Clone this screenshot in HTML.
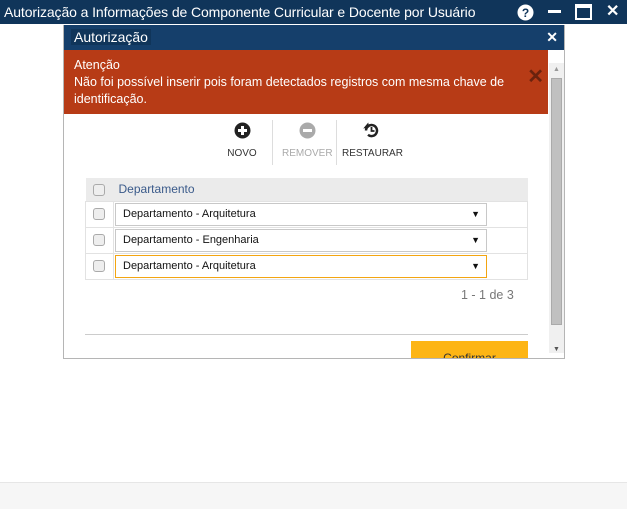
<!DOCTYPE html>
<html><head><meta charset="utf-8"><style>
*{box-sizing:border-box;margin:0;padding:0}
body{width:627px;height:509px;position:relative;background:#fff;font-family:"Liberation Sans",sans-serif;overflow:hidden}
.top{position:absolute;left:0;top:0;width:627px;height:24px;background:#10355a;color:#fff;font-size:14px;line-height:24px;padding-left:4px;letter-spacing:-0.1px}
.foot{position:absolute;left:0;top:482px;width:627px;height:27px;background:#f6f6f6;border-top:1px solid #e6e6e6}
.dlg{position:absolute;left:63px;top:25px;width:502px;height:334px;border:1px solid #b5b5b5;border-top:none;background:#fff;overflow:hidden}
.dt{height:25px;background:#153f6b;color:#fff;font-size:14px;line-height:25px;padding-left:7px}
.err{position:absolute;left:0;top:25px;width:484px;height:64px;background:#b73b16;color:#fff;font-size:12.5px;line-height:17px;padding:7px 10px}
.sb{position:absolute;left:485px;top:38px;width:15px;height:290px;background:#f0f0f0}
.thumb{position:absolute;left:2px;top:15px;width:11px;height:247px;background:#c0c0c0;border:1px solid #aaa}
.tb{position:absolute;top:97px;text-align:center;font-size:10px;color:#333;line-height:13px}
.tb svg{margin-bottom:4px}
.grid{position:absolute;left:21px;top:153px;width:443px;border-collapse:collapse}
.grid td{border:1px solid #e2e2e2;height:26px}
.hd td{background:#ebebeb;border:none;height:23px;color:#3a5a8a;font-size:12px}
.cb{display:inline-block;width:12px;height:12px;border:1px solid #aaa;border-radius:3px;background:#eee;margin-left:7px;vertical-align:middle}
.sel{width:372px;height:23px;border:1px solid #c8c8c8;margin-left:1px;font-size:11px;line-height:21px;padding-left:7px;position:relative;color:#111}
.sel:after{content:"▼";position:absolute;right:6px;top:0;font-size:9px}
</style></head><body>
<div class="top">Autorização a Informações de Componente Curricular e Docente por Usuário
<svg style="position:absolute;left:517px;top:4px" width="17" height="17"><circle cx="8.5" cy="8.5" r="8" fill="#fff"/><text x="8.5" y="13" font-size="12" font-weight="bold" text-anchor="middle" fill="#10355a" font-family="Liberation Sans">?</text></svg>
<div style="position:absolute;left:548px;top:10px;width:13px;height:3px;background:#fff"></div>
<div style="position:absolute;left:575px;top:4px;width:17px;height:16px;border:2px solid #fff;border-top-width:4px"></div>
<div style="position:absolute;left:606px;top:0;font-size:16px;font-weight:bold">✕</div>
</div>
<div class="dlg">
<div class="dt"><span style="background:#10355a;padding:0 3px">Autorização</span><span style="position:absolute;right:6px;top:0;font-weight:bold;font-size:14px">✕</span></div>
<div class="err">Atenção<br>Não foi possível inserir pois foram detectados registros com mesma chave de identificação.<span style="position:absolute;right:4px;top:19px;color:#6a220e;font-size:20px;font-weight:bold">✕</span></div>
<div class="sb"><div style="font-size:7px;color:#999;text-align:center;line-height:14px">▲</div><div class="thumb"></div><div style="position:absolute;bottom:0;width:15px;font-size:7px;color:#555;text-align:center">▼</div></div>
<div class="tb" style="left:161px;width:34px"><svg width="17" height="17" viewBox="0 0 17 17"><circle cx="8.5" cy="8.5" r="8" fill="#222"/><rect x="4" y="7" width="9" height="3" fill="#fff"/><rect x="7" y="4" width="3" height="9" fill="#fff"/></svg><br>NOVO</div>
<div style="position:absolute;left:208px;top:95px;width:1px;height:45px;background:#ddd"></div>
<div class="tb" style="left:218px;width:50px;color:#aaa"><svg width="17" height="17" viewBox="0 0 17 17"><circle cx="8.5" cy="8.5" r="8" fill="#aaa"/><rect x="4" y="7" width="9" height="3" fill="#fff"/></svg><br>REMOVER</div>
<div style="position:absolute;left:272px;top:95px;width:1px;height:45px;background:#ddd"></div>
<div class="tb" style="left:278px;width:58px"><svg width="17" height="17" viewBox="0 0 17 17"><path d="M3 8.5A5.5 5.5 0 1 1 5 12.8" stroke="#222" stroke-width="2.5" fill="none"/><path d="M0 6h6V1z" fill="#222" transform="rotate(-10 3 5)"/><path d="M8.5 5v4h3" stroke="#222" stroke-width="1.8" fill="none"/></svg><br>RESTAURAR</div>
<table class="grid">
<tr class="hd"><td style="width:28px"><span class="cb"></span></td><td style="padding-left:5px">Departamento</td></tr>
<tr><td><span class="cb"></span></td><td><div class="sel">Departamento - Arquitetura</div></td></tr>
<tr><td><span class="cb"></span></td><td><div class="sel">Departamento - Engenharia</div></td></tr>
<tr><td><span class="cb"></span></td><td><div class="sel" style="border-color:#f3a511">Departamento - Arquitetura</div></td></tr>
</table>
<div style="position:absolute;left:397px;top:263px;font-size:12.5px;color:#777">1 - 1 de 3</div>
<div style="position:absolute;left:21px;top:309px;width:443px;height:1px;background:#ccc"></div>
<div style="position:absolute;left:347px;top:316px;width:117px;height:20px;background:#fdb515;color:#333;font-size:12px;text-align:center;line-height:34px;overflow:hidden">Confirmar</div>
</div>
<div class="foot"></div>
</body></html>
